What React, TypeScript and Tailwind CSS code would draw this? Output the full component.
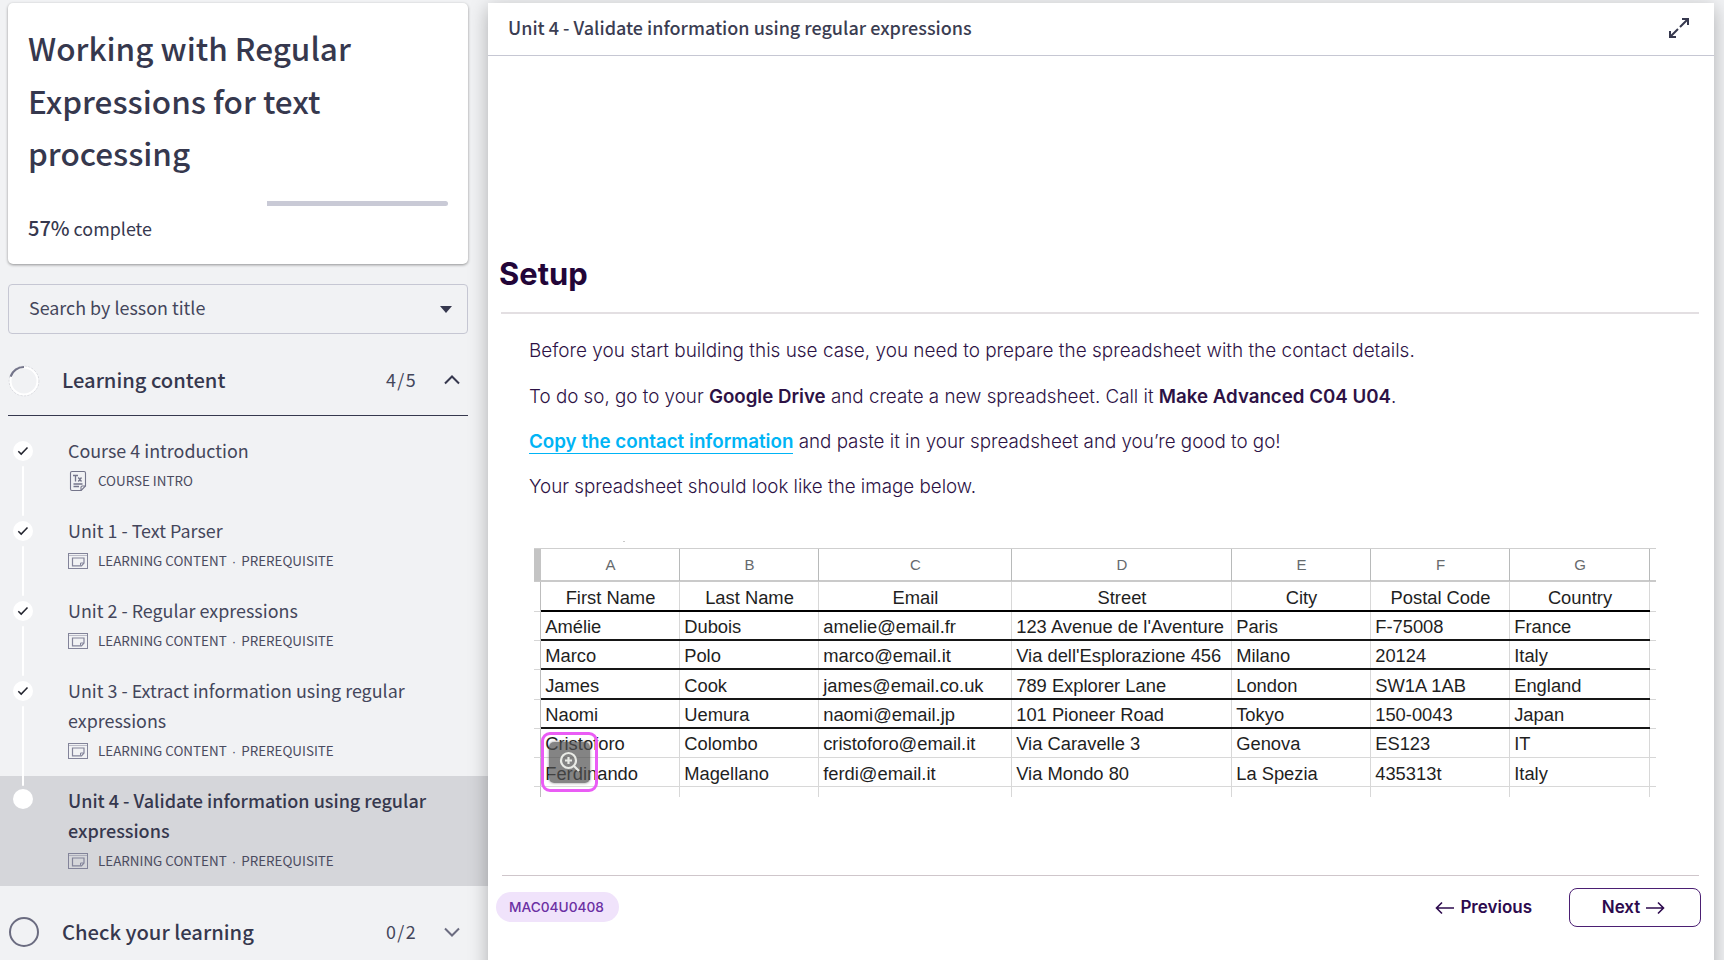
import type { ReactNode } from "react";

type Lesson = {
  title: string[];
  meta: string[];
  kind: "text" | "content";
  done: boolean;
  active?: boolean;
};

const LESSONS: Lesson[] = [
  { title: ["Course 4 introduction"], meta: ["COURSE INTRO"], kind: "text", done: true },
  { title: ["Unit 1 - Text Parser"], meta: ["LEARNING CONTENT", "PREREQUISITE"], kind: "content", done: true },
  { title: ["Unit 2 - Regular expressions"], meta: ["LEARNING CONTENT", "PREREQUISITE"], kind: "content", done: true },
  { title: ["Unit 3 - Extract information using regular", "expressions"], meta: ["LEARNING CONTENT", "PREREQUISITE"], kind: "content", done: true },
  { title: ["Unit 4 - Validate information using regular", "expressions"], meta: ["LEARNING CONTENT", "PREREQUISITE"], kind: "content", done: false, active: true },
];

const LETTERS = ["A", "B", "C", "D", "E", "F", "G"];
const HEADINGS = ["First Name", "Last Name", "Email", "Street", "City", "Postal Code", "Country"];
const CONTACTS = [
  ["Amélie", "Dubois", "amelie@email.fr", "123 Avenue de l'Aventure", "Paris", "F-75008", "France"],
  ["Marco", "Polo", "marco@email.it", "Via dell'Esplorazione 456", "Milano", "20124", "Italy"],
  ["James", "Cook", "james@email.co.uk", "789 Explorer Lane", "London", "SW1A 1AB", "England"],
  ["Naomi", "Uemura", "naomi@email.jp", "101 Pioneer Road", "Tokyo", "150-0043", "Japan"],
  ["Cristoforo", "Colombo", "cristoforo@email.it", "Via Caravelle 3", "Genova", "ES123", "IT"],
  ["Ferdinando", "Magellano", "ferdi@email.it", "Via Mondo 80", "La Spezia", "435313t", "Italy"],
];
const ROW_HEIGHTS = ["h-[29px]", "h-[29px]", "h-[30px]", "h-[29px]", "h-[29px]", "h-[29px]"];
const ROW_PADDING = ["pt-[4px]", "pt-[4px]", "pt-[5px]", "pt-[4px]", "pt-[4px]", "pt-[5px]"];

function TextDocIcon() {
  return (
    <svg width="20" height="22" viewBox="0 0 20 22" fill="none" stroke="#74758a" strokeWidth="1.1">
      <path d="M4 1.500h12a1.500 1.500 0 0 1 1.500 1.500v13l-4.300 4.500H4A1.500 1.500 0 0 1 2.500 19V3A1.500 1.500 0 0 1 4 1.500z" />
      <path d="M13 20.500v-3.300a1.200 1.200 0 0 1 1.200-1.200h3.200" />
      <path d="M5 5.500h5M7.500 5.500v6M10.300 7.500l3.200 4M13.500 7.500l-3.200 4M5.500 14h9M5.500 16.500h5.500" strokeWidth="1.300" />
    </svg>
  );
}

function ContentIcon() {
  return (
    <svg width="20" height="16" viewBox="0 0 20 16" fill="none" stroke="#83849a" strokeWidth="1">
      <rect x="0.500" y="0.500" width="19" height="15" />
      <path d="M0.500 2.500h19" strokeOpacity="0.500" />
      <path d="M4.500 5h11.500v5l-2.500 2.800H4.500z" strokeWidth="1.200" />
      <path d="M12.500 12.500v-2.500h3" />
    </svg>
  );
}

function Check() {
  return (
    <svg width="12" height="10" viewBox="0 0 12 10" fill="none" stroke="#24252f" strokeWidth="1.500">
      <path d="M1.300 5.200l2.900 2.900 6.300-6.700" />
    </svg>
  );
}

function Chevron({ up }: { up?: boolean }) {
  return (
    <svg width="16" height="10" viewBox="0 0 16 10" fill="none" stroke={up ? "#36384e" : "#6b6c80"} strokeWidth="2">
      <path d={up ? "M1 8.500l7-7 7 7" : "M1 1.500l7 7 7-7"} />
    </svg>
  );
}

function LessonRow({ lesson }: { lesson: Lesson }) {
  return (
    <div className={`flex py-[10px] pl-[13px] ${lesson.active ? "bg-[#d5d6da]" : ""}`}>
      <div className="flex w-5 shrink-0 flex-col items-center">
        <div className={`relative z-10 flex h-5 w-5 shrink-0 items-center justify-center rounded-full bg-white ${lesson.active ? "mt-[3px]" : "mt-[5px]"}`}>
          {lesson.done && <Check />}
        </div>
        {!lesson.active && <div className="relative z-10 mb-[-20px] mt-[5px] w-[2px] flex-1 rounded bg-white" />}
      </div>
      <div className="ml-[35px]">
        {lesson.title.map((line) => (
          <div key={line} className={`h-[30px] whitespace-nowrap leading-[28px] ${lesson.active ? "text-[18px] font-medium text-[#36384e]" : "text-[17.9px] font-normal text-[#44465b]"}`}>
            {line}
          </div>
        ))}
        <div className="flex h-[30px] items-center gap-[10px] text-[#4a4b5f]">
          {lesson.kind === "text" ? <TextDocIcon /> : <ContentIcon />}
          <span className={`whitespace-nowrap text-[13.4px] leading-[30px] ${lesson.kind === "text" ? "pb-[2px]" : ""}`}>
            {lesson.meta[0]}
            {lesson.meta[1] && (
              <>
                {" "}
                <span className="inline-block w-[8.500px] text-center font-['Liberation_Sans',sans-serif]">·</span> {lesson.meta[1]}
              </>
            )}
          </span>
        </div>
      </div>
    </div>
  );
}

function Sidebar() {
  return (
    <aside className="flex h-full w-[488px] shrink-0 flex-col font-['Noto_Sans_CJK_SC','Source_Sans_3',sans-serif] text-[#36384e]">
      <section className="ml-2 mt-[3px] h-[261px] w-[460px] shrink-0 rounded-[5px] bg-white px-5 pt-[18px] shadow-[0_1px_3px_rgba(0,0,0,0.4)]">
        <h1 className="text-[31.5px] font-medium leading-[52.5px]">
          Working with Regular
          <br />
          Expressions for text
          <br />
          processing
        </h1>
        <div className="mt-[22px] flex h-[5px] w-[420px] justify-end">
          <div className="h-[5px] w-[181px] rounded-r-full bg-[#c9cad6]" />
        </div>
        <p className="mt-[7px] text-[17.9px] leading-[30px]">
          <span className="text-[20px] font-medium">57%</span> complete
        </p>
      </section>

      <div className="ml-2 mt-5 flex h-[50px] w-[460px] shrink-0 items-center justify-between rounded-[4px] border border-[#c6c7d3] pl-5 pr-[15px] text-[17.9px] leading-[30px] text-[#44465b]">
        <span className="pb-[4px]">Search by lesson title</span>
        <svg width="12" height="7" viewBox="0 0 12 7">
          <path d="M0 0h12L6 7z" fill="#36384e" />
        </svg>
      </div>

      <div className="ml-2 mt-[12px] flex h-[70px] w-[460px] shrink-0 items-center border-b border-[#36384e]">
        <svg width="32" height="32" viewBox="0 0 32 32" fill="none">
          <circle cx="16" cy="16" r="14.800" stroke="#c4c5cd" strokeWidth="0.700" strokeDasharray="2 1.500" />
          <circle cx="16" cy="16" r="13.500" stroke="#fff" strokeWidth="2" />
          <path d="M2.600 11.600A14 14 0 0 1 16 2" stroke="#74758a" strokeWidth="2.200" />
        </svg>
        <span className="ml-[22px] flex-1 pb-px text-[20.150px] font-medium leading-[30px]">Learning content</span>
        <span className="pb-[3px] text-[17.900px] leading-[30px] tracking-[1.400px] text-[#44465b]">4/5</span>
        <span className="ml-[27px] mr-2 mb-px">
          <Chevron up />
        </span>
      </div>

      <div className="mt-[10px] flex shrink-0 flex-col">
        {LESSONS.map((l) => (
          <LessonRow key={l.title[0]} lesson={l} />
        ))}
      </div>

      <div className="ml-2 mt-[11px] flex h-[70px] w-[460px] shrink-0 items-center">
        <svg width="32" height="32" viewBox="0 0 32 32" fill="none">
          <circle cx="16" cy="16" r="14" stroke="#6b6c80" strokeWidth="2" />
        </svg>
        <span className="ml-[22px] flex-1 text-[20.200px] font-medium leading-[30px]">Check your learning</span>
        <span className="pb-[2px] text-[17.900px] leading-[30px] tracking-[1.400px] text-[#44465b]">0/2</span>
        <span className="ml-[27px] mr-2">
          <Chevron />
        </span>
      </div>
    </aside>
  );
}

function SheetRow({ height, line, stub, cells, cellClass }: { height: string; line: string; stub: string; cells: ReactNode[]; cellClass: string }) {
  return (
    <div className={`grid grid-cols-[7px_139px_139px_193px_220px_139px_139px_140px_6px] ${height}`}>
      <div className={`border-r border-[#bdbdbd] ${stub}`} />
      {cells.map((c, i) => (
        <div key={i} className="whitespace-nowrap border-r border-[#d8d8d8]">
          <div className={`h-full ${line} ${cellClass}`}>{c}</div>
        </div>
      ))}
      <div className={stub} />
    </div>
  );
}

function Spreadsheet() {
  return (
    <div className="relative ml-[46px] w-[1122px] border-t border-[#cfcfcf] font-['Liberation_Sans',Arial,sans-serif] text-[18.350px] leading-[22px] text-[#1f1f1f]">
      <div className="grid h-[33px] grid-cols-[7px_139px_139px_193px_220px_139px_139px_140px_6px] border-b-2 border-[#cacaca] text-center text-[15px] leading-[32px] text-[#666a6d]">
        <div className="bg-[#c4c4c4]" />
        {LETTERS.map((l) => (
          <div key={l} className="border-r border-[#b8baba] pl-px">
            {l}
          </div>
        ))}
        <div />
      </div>
      <SheetRow height="h-[30px]" line="-mr-px border-b-2 border-black" stub="border-b border-b-[#d6d6d6]" cells={HEADINGS} cellClass="pt-[5px] text-center" />
      {CONTACTS.map((row, i) => (
        <SheetRow
          key={row[0]}
          height={ROW_HEIGHTS[i]}
          line={i < 4 ? "-mr-px border-b-2 border-[#161616]" : "border-b border-[#d8d8d8]"}
          stub="border-b border-b-[#d6d6d6]"
          cells={row}
          cellClass={`pl-[4.200px] ${ROW_PADDING[i]}`}
        />
      ))}
      <SheetRow height="h-[10px]" line="" stub="" cells={["", "", "", "", "", "", ""]} cellClass="" />

      <div className="absolute left-[89px] top-[-8px] h-px w-[2px] bg-[#c9c9c9]" />
      <div className="absolute left-[7px] top-[183px] flex h-[60px] w-[57px] items-center justify-center rounded-[9px] border-[3px] border-[#ea5cf5]">
        <div className="flex h-[41px] w-[41px] items-center justify-center rounded-[5px] bg-[#505050]/70 shadow-[0_0_3px_rgba(60,60,60,0.6)]">
          <svg width="22" height="22" viewBox="0 0 22 22" fill="none" stroke="#e9ebe6" strokeWidth="2.200">
            <circle cx="9.500" cy="9.500" r="7.500" />
            <path d="M15 15l5 5M9.500 6v7M6 9.500h7" />
          </svg>
        </div>
      </div>
    </div>
  );
}

function Arrow({ left }: { left?: boolean }) {
  return (
    <svg width="20" height="14" viewBox="0 0 20 14" fill="none" stroke="#2d0a4e" strokeWidth="1.600">
      <path d={left ? "M19 7H1.500M7 1.500L1.500 7 7 12.500" : "M1 7h17.500M13 1.500L18.500 7 13 12.500"} />
    </svg>
  );
}

function LessonPanel() {
  return (
    <main className="relative z-20 mt-[3px] flex h-[980px] w-[1226px] shrink-0 flex-col bg-white shadow-[0_5px_18px_rgba(0,0,0,0.28)]">
      <header className="flex h-[53px] shrink-0 items-center justify-between border-b border-[#c6c7d3] pl-5 pr-6 font-['Noto_Sans_CJK_SC','Source_Sans_3',sans-serif]">
        <span className="pb-[5px] text-[18px] font-medium leading-[30px] text-[#3b3d52]">Unit 4 - Validate information using regular expressions</span>
        <svg className="mb-[2px]" width="22" height="22" viewBox="0 0 22 22" fill="none" stroke="#36384e" strokeWidth="2">
          <path d="M14 2h6v6M20 2l-8 8M8 20H2v-6M2 20l8-8" />
        </svg>
      </header>

      <div className="flex flex-col font-['Inter',sans-serif] text-[#2d1245]">
        <h2 className="ml-[11px] mt-[197px] text-[30.900px] font-bold leading-[42px] text-[#220538]">Setup</h2>
        <div className="ml-[13px] mt-[17px] h-[2px] w-[1198px] bg-[#e3dfe2]" />

        <div className="ml-[41px] mt-[14px] flex flex-col whitespace-nowrap text-[18.800px] font-light leading-[45.300px]">
          <p className="text-[18.960px]">Before you start building this use case, you need to prepare the spreadsheet with the contact details.</p>
          <p className="-mb-px pt-px">
            To do so, go to your <b className="text-[18.700px] font-semibold">Google Drive</b> and create a new spreadsheet. Call it{" "}
            <b className="text-[18.700px] font-semibold">Make Advanced C04 U04</b>.
          </p>
          <p>
            <a className="border-b border-[#00b4f5] text-[18.780px] font-semibold text-[#00b4f5]">Copy the contact information</a> and paste it in your spreadsheet and you’re good to go!
          </p>
          <p>Your spreadsheet should look like the image below.</p>
        </div>

        <div className="mt-[39px]">
          <Spreadsheet />
        </div>

        <div className="ml-[14px] mt-[78px] h-px w-[1197px] bg-[#cfc6cb]" />

        <footer className="mt-[12px] flex h-[39px] items-center pl-[8px] pr-[13px] text-[#2d0a4e]">
          <span className="-mt-px flex h-[30px] w-[123px] items-center justify-center rounded-full bg-[#f0e3fb] pr-[2px] text-[13.700px] font-medium text-[#6b2fa3]">MAC04U0408</span>
          <span className="ml-auto flex items-center gap-[5px] text-[17px] font-semibold">
            <Arrow left />
            Previous
          </span>
          <button className="ml-[37px] flex h-[39px] w-[132px] items-center justify-center gap-[5px] rounded-[8px] border border-[#4b1f73] pr-[3px] text-[17px] font-semibold">
            Next
            <Arrow />
          </button>
        </footer>
      </div>
    </main>
  );
}

export default function App() {
  return (
    <div className="flex h-[960px] w-[1724px] overflow-hidden bg-[#f1f2f4]">
      <Sidebar />
      <LessonPanel />
    </div>
  );
}
